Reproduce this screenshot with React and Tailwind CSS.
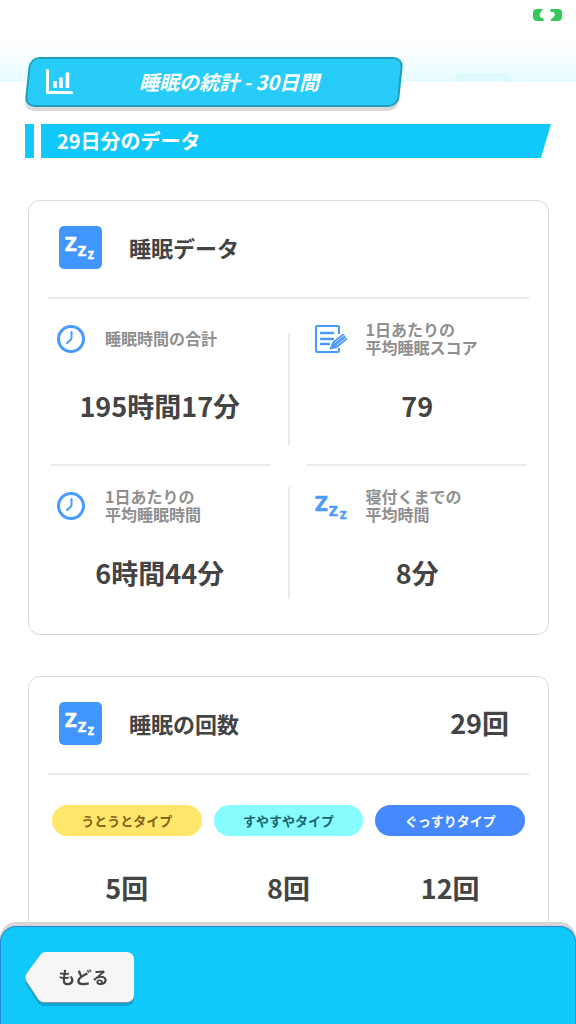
const font = "font-['Noto_Sans_CJK_JP','Noto_Sans',sans-serif]"

const sleepTypes = [
  { name: 'うとうとタイプ', count: '5回', cls: 'bg-[#ffe76b] text-[#80601c]' },
  { name: 'すやすやタイプ', count: '8回', cls: 'bg-[#87fcff] text-[#1b6470]' },
  { name: 'ぐっすりタイプ', count: '12回', cls: 'bg-[#4689ff] text-white' },
]

export default function App() {
  return (
    <div className={`relative min-h-screen bg-white pb-20 font-bold text-[#444444] ${font}`}>
      <Backdrop />
      <BatteryIcon />

      <header className="relative pt-[57px]">
        <div className="relative ml-[27px] flex h-[50px] max-w-[374px] items-center">
          <div className="absolute inset-0 -skew-x-6 rounded-[10px] border-2 border-[#1f9fbe] bg-[#27cdf8] shadow-[0_4px_0_#d9d9d9]" />
          <ChartIcon />
          <h1 className="relative flex-1 pr-4 text-center text-[20px] leading-[30px] text-white italic">
            睡眠の統計 - 30日間
          </h1>
        </div>
        <div className="mt-[17px] mr-[25px] ml-[25px] flex h-[34px] gap-[7px]">
          <div className="w-[9px] bg-[#10c8f9]" />
          <h2 className="flex flex-1 items-center bg-[#10c8f9] pl-4 text-[20px] leading-[30px] text-white [clip-path:polygon(0_0,100%_0,calc(100%-10px)_100%,0_100%)]">
            29日分のデータ
          </h2>
        </div>
      </header>

      <main className="mt-[42px] mr-[27px] ml-7 space-y-[41px]">
        <Card title="睡眠データ">
          <div className="grid grid-cols-[1fr_2px_1fr] pb-[3px]">
            <Stat icon={<ClockIcon />} label="睡眠時間の合計" value="195時間17分" />
            <div className="mt-[34px] h-28 bg-[#ebebeb]" />
            <Stat right icon={<NoteIcon />} label={'1日あたりの\n平均睡眠スコア'} value="79" />

            <div className="mr-[17px] ml-[22px] h-[2px] bg-[#ebebeb]" />
            <div />
            <div className="mr-[21px] ml-[17px] h-[2px] bg-[#ebebeb]" />

            <Stat icon={<ClockIcon />} label={'1日あたりの\n平均睡眠時間'} value="6時間44分" />
            <div className="mt-[21px] h-28 bg-[#ebebeb]" />
            <Stat right icon={<SleepIcon />} label={'寝付くまでの\n平均時間'} value="8分" />
          </div>
        </Card>

        <Card title="睡眠の回数" total="29回">
          <ul className="grid grid-cols-3 gap-3 px-[23px] pt-[30px] pb-8">
            {sleepTypes.map((t) => (
              <li key={t.name} className="text-center">
                <p className={`h-[31px] rounded-full text-[13px] leading-[31px] ${t.cls}`}>
                  {t.name}
                </p>
                <p className="mt-8 text-[27px] leading-[40px]">{t.count}</p>
              </li>
            ))}
          </ul>
        </Card>
      </main>

      <footer className="fixed inset-x-0 bottom-0 h-[98px] rounded-t-2xl border border-b-0 border-[#2b83d3] bg-[#10c8f9] pt-[25px] pl-6 shadow-[0_-4px_0_#d6d6d6]">
        <button
          type="button"
          className="relative block h-[50px] w-[109px] pl-2 text-center text-[17px] leading-[50px]"
        >
          <BackShape />
          <span className="relative">もどる</span>
        </button>
      </footer>
    </div>
  )
}

function Card({ title, total, children }) {
  return (
    <section className="rounded-xl border border-[#d9d9d9] bg-white">
      <div className="mx-[19px] flex items-center border-b-2 border-[#ebebeb] pt-[25px] pr-[20px] pb-7 pl-[11px]">
        <SleepBadge />
        <h3 className="ml-[27px] flex-1 pb-[2px] text-[22px] leading-[40px]">{title}</h3>
        {total && <p className="pb-[2px] text-[27px] leading-[40px]">{total}</p>}
      </div>
      {children}
    </section>
  )
}

function Stat({ icon, label, value, right }) {
  return (
    <div className="h-[165px] pt-[22px]">
      <div className={right ? 'flex h-9 items-center gap-[18px] pl-[25px]' : 'flex h-9 items-center gap-5 pl-7'}>
        {icon}
        <p className="pb-[2px] text-[16px] leading-[18px] whitespace-pre-line text-[#8f8f8f]">{label}</p>
      </div>
      <p
        className={`mt-[29px] text-center text-[27px] leading-[40px] ${right ? 'pr-[3px]' : 'pl-[3px]'}`}
      >
        {value}
      </p>
    </div>
  )
}

function Backdrop() {
  return (
    <div className="absolute inset-x-0 top-0 h-[82px] overflow-hidden bg-linear-to-b from-white from-50% to-[#e6fcff]">
      <svg className="absolute right-[60px] bottom-0" width="62" height="9" viewBox="0 0 62 9">
        <path d="M1 9V5Q1 0 6 0H50Q53 0 55 2L62 9H51L49 7H8L6 9Z" fill="#dcfafd" />
      </svg>
    </div>
  )
}

function BatteryIcon() {
  return (
    <svg className="absolute top-[9px] right-[14px]" width="29" height="12" viewBox="0 0 29 12" fill="#34c759">
      <path d="M4 0H10L7 4.500Q6 6 7 7.500L8 9H10.500V12H4Q0 12 0 8V4Q0 0 4 0Z" />
      <path d="M17.500 0H25Q29 0 29 4V8Q29 12 25 12H17.500V11L21.500 7Q22.500 6 21.500 4.500L20.500 3H17.500Z" />
    </svg>
  )
}

function ChartIcon() {
  return (
    <svg className="relative ml-[19px] shrink-0" width="27" height="26" viewBox="0 0 27 26" fill="none" stroke="#fff">
      <path d="M1.500 1.500V23.500H25.500" strokeWidth="3" strokeLinecap="round" strokeLinejoin="round" />
      <path d="M9 12V19M15 8.500V19M21.500 3.500V19" strokeWidth="3.600" />
    </svg>
  )
}

function SleepBadge() {
  return (
    <svg width="43" height="43" viewBox="0 0 43 43" className="shrink-0">
      <rect width="43" height="43" rx="5" fill="#4095ff" />
      <g fill="#fff" stroke="#fff" strokeWidth="0.600" className="font-['Noto_Sans'] font-bold">
        <text x="6" y="25" fontSize="20">Z</text>
        <text x="19" y="30" fontSize="14">Z</text>
        <text x="29" y="33" fontSize="10">Z</text>
      </g>
    </svg>
  )
}

function SleepIcon() {
  return (
    <svg width="33" height="28" viewBox="0 0 33 28" className="shrink-0 overflow-visible">
      <g fill="#4a9bff" stroke="#4a9bff" strokeWidth="0.600" className="font-['Noto_Sans'] font-bold">
        <text x="0" y="19" fontSize="22">Z</text>
        <text x="14" y="24" fontSize="15">Z</text>
        <text x="25" y="27" fontSize="11">Z</text>
      </g>
    </svg>
  )
}

function ClockIcon() {
  return (
    <svg width="28" height="28" viewBox="0 0 28 28" className="shrink-0" fill="none" stroke="#4a9bff">
      <circle cx="14" cy="14" r="12.500" strokeWidth="3" />
      <path d="M14.500 7V13Q14.500 14 13.800 14.700L10 18" strokeWidth="2" strokeLinecap="round" />
    </svg>
  )
}

function NoteIcon() {
  return (
    <svg width="33" height="28" viewBox="0 0 33 28" className="shrink-0" fill="none" stroke="#4a9bff">
      <path d="M24 9V2Q24 1 23 1H2Q1 1 1 2V26Q1 27 2 27H23Q24 27 24 26V23" strokeWidth="2" />
      <path d="M6 8H18M6 14H18M6 19H14" strokeWidth="2.400" strokeLinecap="round" />
      <path d="M15 24L18 17L28 9L32 14L22 22.500Z" fill="#4a9bff" />
      <path d="M19.500 18L30 9.500M21.500 20.500L32 12" stroke="#fff" strokeWidth="0.700" />
    </svg>
  )
}

function BackShape() {
  const d = 'M16 2Q18 0 21 0H101Q109 0 109 8V42Q109 50 101 50H19Q16 50 14 48L2 30Q-1 25 2 21Z'
  return (
    <svg className="absolute inset-0 overflow-visible" width="109" height="50" viewBox="0 0 109 50">
      <path d={d} fill="#0ba6d4" transform="translate(0 4)" />
      <path d={d} fill="#8d9599" transform="translate(0 1)" />
      <path d={d} fill="#f6f6f6" />
    </svg>
  )
}
